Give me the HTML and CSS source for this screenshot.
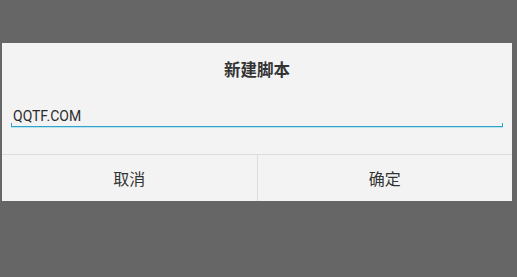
FILE: index.html
```html
<!DOCTYPE html>
<html lang="zh">
<head>
  <meta charset="UTF-8" />
  <title>新建脚本</title>
  <link rel="stylesheet" href="styles.css">
</head>
<body>
  <div class="dialog">
    <div class="title">新建脚本</div>
    <div class="field">
      <div class="input">QQTF.COM</div>
    </div>
    <div class="buttons">
      <button class="btn">取消</button>
      <button class="btn">确定</button>
    </div>
  </div>
</body>
</html>
```

FILE: styles.css
```css
body {
  margin: 0;
  background: #666666;
  font-family: Roboto, "Noto Sans CJK SC", sans-serif;
  color: #333;
}
.dialog {
  margin: 43px 0 0 2px;
  width: 510px;
  background: #f3f3f3;
}
.title {
  height: 52px;
  line-height: 52px;
  text-align: center;
  font-family: "Noto Sans CJK SC", sans-serif;
  font-size: 16.5px;
  font-weight: bold;
  color: #333;
}
.field {
  padding: 11px 9px 27px;
}
.input {
  position: relative;
  height: 20px;
  line-height: 20px;
  padding-left: 2px;
  font-size: 14px;
  color: #2b2b2b;
  border-bottom: 1px solid #2fa4c7;
  box-shadow: 0 1px 0 #b8e2f0;
}
.input::before, .input::after {
  content: "";
  position: absolute;
  bottom: -1px;
  width: 1px;
  height: 4px;
  background: #2fa4c7;
}
.input::before { left: 0; }
.input::after { right: 0; }
.buttons {
  display: flex;
  border-top: 1px solid #dcdcdc;
}
.btn {
  flex: 1;
  height: 46px;
  border: none;
  background: transparent;
  font-family: "Noto Sans CJK SC", sans-serif;
  font-size: 16px;
  color: #333;
  padding: 0;
}
.btn + .btn {
  border-left: 1px solid #dcdcdc;
}
```
